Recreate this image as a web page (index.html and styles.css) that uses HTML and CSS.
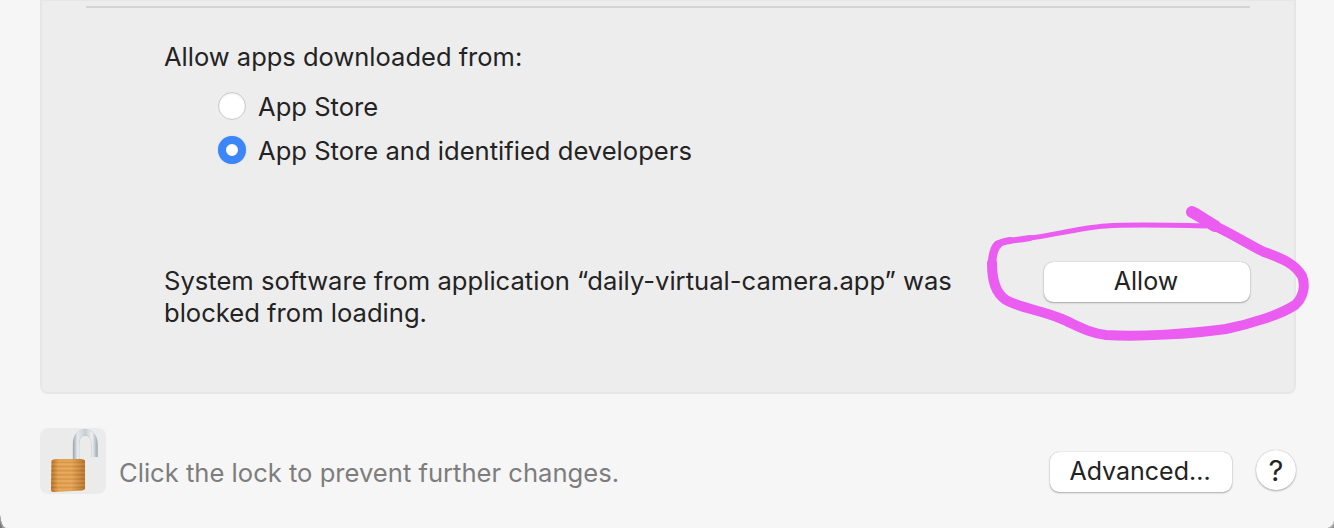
FILE: index.html
```html
<!DOCTYPE html>
<html lang="en">
<head>
<meta charset="utf-8">
<title>Security &amp; Privacy</title>
<link rel="stylesheet" href="styles.css">
</head>
<body>
<div class="window">
  <section class="panel">
    <hr class="divider">
    <div class="group">
      <p class="label">Allow apps downloaded from:</p>
      <div class="radios">
        <div class="radio-row"><span class="radio"></span><span>App Store</span></div>
        <div class="radio-row"><span class="radio checked"></span><span>App Store and identified developers</span></div>
      </div>
    </div>
    <div class="notice">
      <p class="notice-text">System software from application “daily-virtual-camera.app” was<br>blocked from loading.</p>
      <button class="btn btn-allow">Allow</button>
    </div>
  </section>
  <footer class="footer">
    <div class="lock">
      <svg width="66" height="66" viewBox="0 0 66 66" aria-hidden="true">
        <defs>
          <linearGradient id="silver" gradientUnits="userSpaceOnUse" x1="33" x2="58" y1="0" y2="0">
            <stop offset="0" stop-color="#9aa6ac"/>
            <stop offset=".18" stop-color="#e6eaec"/>
            <stop offset=".5" stop-color="#c6ced2"/>
            <stop offset=".76" stop-color="#eef1f2"/>
            <stop offset="1" stop-color="#98a3a9"/>
          </linearGradient>
          <linearGradient id="gold" x1="0" x2="1" y1="0" y2="0">
            <stop offset="0" stop-color="#b46f24"/>
            <stop offset=".22" stop-color="#e3a150"/>
            <stop offset=".6" stop-color="#e2a354"/>
            <stop offset="1" stop-color="#b8742a"/>
          </linearGradient>
          <pattern id="ribs" width="4" height="4.2" patternUnits="userSpaceOnUse">
            <rect width="4" height="1.4" fill="#8a4f12" opacity=".16"/>
            <rect y="2" width="4" height="1.2" fill="#fff1c8" opacity=".14"/>
          </pattern>
        </defs>
        <path class="shackle-edge" d="M36 32V17C36 8.500 40 4.500 45 4.500S54.500 8.500 54.500 17V29"/>
        <path class="shackle" d="M36 32V17C36 8.500 40 4.500 45 4.500S54.500 8.500 54.500 17V29"/>
        <path fill="url(#gold)" d="M11.500 32.500Q13 31 16 31H41Q44 31 45 32.500V60.500Q45 62 42 62.400L14 64Q11 64 11 62Z"/>
        <path fill="url(#ribs)" d="M11 34H45V60.500L11 62.500Z"/>
      </svg>
    </div>
    <p class="hint">Click the lock to prevent further changes.</p>
    <button class="btn btn-advanced">Advanced...</button>
    <button class="btn-help">?</button>
  </footer>
  <span class="corner corner-left"></span>
  <span class="corner corner-right"></span>
  <svg class="scribble" width="1334" height="528" viewBox="0 0 1334 528" aria-hidden="true">
    <path class="ink ink-5" d="M1206 226C1170 225 1130 224 1106 226C1078 228 1050 236 1030 238"/>
    <path class="ink ink-6" d="M1030 238C1024 239 1017 240 1010 240.500"/>
    <path class="ink ink-7" d="M1010 240.500C1005 241 1001 242 998 244.500"/>
    <path class="ink ink-8" d="M998 244.500C994 248 992.500 254 992 263"/>
    <path class="ink ink-10" d="M992 263C992 280 995 293 1006 300C1020 308 1040 310 1062 319C1076 325 1088 333 1106 335C1140 337 1190 334 1226 329C1250 324 1280 315 1295 305C1303 298 1306 286 1302 276C1295 264 1282 258 1264 252C1250 245 1232 234 1215 226"/>
    <path class="ink ink-12" d="M1215 226C1206 221 1200 216 1192 212"/>
  </svg>
</div>
</body>
</html>
```
FILE: styles.css
```css
* { box-sizing: border-box; }
html, body { margin: 0; height: 100%; }
body {
  font-family: Inter, "Liberation Sans", sans-serif;
  font-size: 25.6px;
  color: #232323;
  overflow: hidden;
}
.window {
  position: relative;
  width: 1334px;
  height: 528px;
  background: #f6f6f6;
  overflow: hidden;
}
p { margin: 0; }
.panel {
  height: 395px;
  margin: -1px 38px 0 40px;
  padding-top: 5px;
  background: #ededed;
  border: 2px solid #e6e6e6;
  border-radius: 0 0 8px 8px;
}
.divider {
  height: 2px;
  margin: 0 44px;
  border: 0;
  background: #d4d4d4;
}
.group {
  margin: 33px 0 0 122px;
}
.label {
  font-size: 25.5px;
  line-height: 32px;
}
.radios {
  display: flex;
  flex-direction: column;
  gap: 12px;
  margin: 17px 0 0 54px;
}
.radio-row {
  display: flex;
  align-items: center;
  gap: 12px;
  height: 32px;
}
.radio {
  width: 28px;
  height: 28px;
  border-radius: 50%;
  background: #fff;
  border: 1px solid #c8c8c8;
  box-shadow: inset 0 1px 2px rgba(0,0,0,.08);
}
.radio.checked {
  background: #fff;
  border: 8px solid #3d86f7;
  box-shadow: 0 0 1px rgba(61,134,247,.5);
}
.notice {
  display: flex;
  align-items: flex-start;
  justify-content: space-between;
  margin: 99px 44px 0 122px;
}
.notice-text { line-height: 32px; }
.btn {
  height: 40px;
  padding: 0 2px 2px 0;
  border: 0;
  border-radius: 9px;
  background: #fff;
  color: #232323;
  font: inherit;
  font-size: 25px;
  box-shadow: 0 0 1px rgba(0,0,0,.35), 0 1px 2px rgba(0,0,0,.28);
}
.btn-allow { width: 206px; margin-top: -3px; }
.footer {
  display: flex;
  align-items: flex-start;
  padding: 34px 38px 0 40px;
}
.lock {
  width: 66px;
  height: 66px;
  border-radius: 8px;
  background: #ebebeb;
  flex: none;
}
.lock svg { display: block; }
.shackle, .shackle-edge { fill: none; }
.shackle-edge {
  stroke: #b4bdc2;
  stroke-width: 6.500;
}
.shackle {
  stroke: url(#silver);
  stroke-width: 6;
}
.hint {
  margin: 30px 0 0 13px;
  line-height: 30px;
  color: #7d7d7d;
}
.btn-advanced {
  width: 182px;
  margin: 24px 0 0 auto;
}
.btn-help {
  width: 40px;
  height: 40px;
  margin: 22px 0 0 24px;
  padding: 0;
  border: 0;
  border-radius: 50%;
  background: #fff;
  color: #232323;
  font: inherit;
  font-size: 29px;
  box-shadow: 0 0 1px rgba(0,0,0,.3), 0 1px 2px rgba(0,0,0,.28);
}
.corner {
  position: absolute;
  bottom: 0;
}
.corner-left {
  left: 0;
  width: 6px;
  height: 18px;
  background: radial-gradient(ellipse 6px 18px at 100% 0, transparent 96%, #b0b0b0 100%, #777 125%);
}
.corner-right {
  right: 0;
  width: 8px;
  height: 9px;
  background: radial-gradient(ellipse 8px 9px at 0 0, transparent 96%, #c4c4c4 100%, #8a8a8a 130%);
}
.scribble {
  position: absolute;
  inset: 0;
  pointer-events: none;
}
.ink {
  fill: none;
  stroke: #eb5cf0;
  stroke-linecap: round;
  stroke-linejoin: round;
}
.ink-5 { stroke-width: 5; }
.ink-6 { stroke-width: 6; }
.ink-7 { stroke-width: 7; }
.ink-8 { stroke-width: 8.500; }
.ink-10 { stroke-width: 10; }
.ink-12 { stroke-width: 12; }
```
